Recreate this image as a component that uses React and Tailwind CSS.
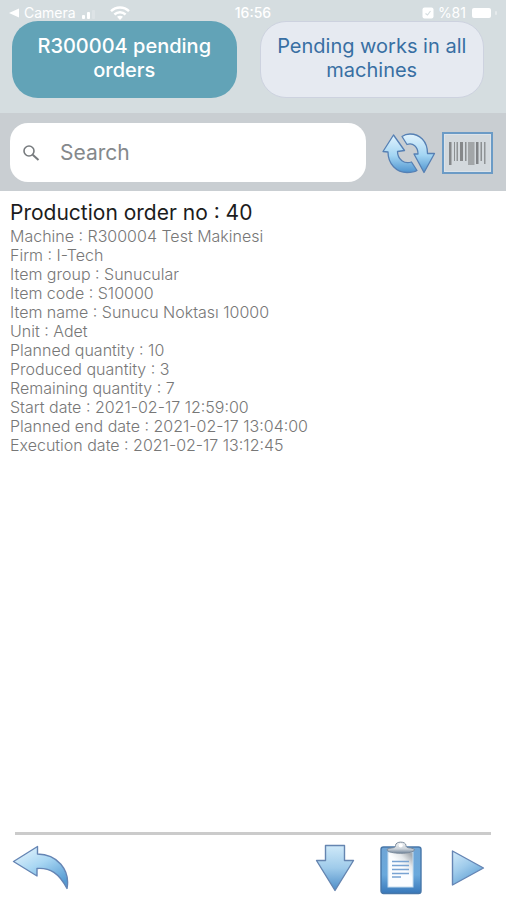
const ORDER_FIELDS = [
  ['Machine', 'R300004 Test Makinesi'],
  ['Firm', 'I-Tech'],
  ['Item group', 'Sunucular'],
  ['Item code', 'S10000'],
  ['Item name', 'Sunucu Noktası 10000'],
  ['Unit', 'Adet'],
  ['Planned quantity', '10'],
  ['Produced quantity', '3'],
  ['Remaining quantity', '7'],
  ['Start date', '2021-02-17 12:59:00'],
  ['Planned end date', '2021-02-17 13:04:00'],
  ['Execution date', '2021-02-17 13:12:45'],
]

// Barcode bars: x, width, height, fill
const BARS = [
  [7, 2.5, 23, '#85888a'],
  [12, 1, 19, '#8c9092'],
  [14.5, 1.5, 19, '#909496'],
  [18, 3, 19, '#85888a'],
  [23, 1.5, 19, '#8c9092'],
  [26, 6.5, 23, '#a2a6a8'],
  [34, 2.5, 22, '#808386'],
  [38.5, 1.5, 19, '#8c9092'],
  [42, 1.5, 22, '#909496'],
]

function StatusBar() {
  return (
    <div className="grid h-[21px] grid-cols-3 items-end px-2 text-sm leading-4 text-white">
      <div className="flex items-center gap-1">
        <svg width="12" height="10" viewBox="0 0 12 10" fill="currentColor">
          <path d="M11 0.5v9L1 5z" />
        </svg>
        <span>Camera</span>
        <svg width="18" height="12" viewBox="0 0 18 12" fill="currentColor">
          <rect x="2" y="8" width="3" height="4" rx="1" />
          <rect x="7" y="5" width="3" height="7" rx="1" />
          <rect x="12" y="3" width="3" height="9" rx="1" opacity="0.2" />
        </svg>
        <svg className="ml-2" width="20" height="14" viewBox="0 0 20 14" fill="none" stroke="currentColor" strokeWidth="2.4">
          <path d="M1 5.2C6 0.2 14 0.2 19 5.2" />
          <path d="M4.4 8.5c3.2-3 8-3 11.2 0" />
          <path d="M7 10.8c1.8-1.5 4.2-1.5 6 0L10 14z" fill="currentColor" stroke="none" />
        </svg>
      </div>
      <span className="text-center font-medium">16:56</span>
      <div className="flex items-center justify-end gap-1">
        <svg width="12" height="12" viewBox="0 0 12 12">
          <rect x="0.5" y="0.5" width="11" height="11" rx="2" fill="#fff" />
          <path d="M3.5 6.5l2 1.5 3-4" fill="none" stroke="#d5dde0" strokeWidth="1.2" />
        </svg>
        <span>%81</span>
        <svg width="28" height="12" viewBox="0 0 28 12" fill="#fff">
          <rect x="2" y="1" width="19" height="10" rx="2" />
          <rect x="25" y="4" width="2" height="4" rx="1" opacity="0.4" />
        </svg>
      </div>
    </div>
  )
}

function RefreshIcon() {
  return (
    <svg width="54" height="44" viewBox="0 0 54 44">
      <defs>
        <linearGradient id="refresh" x1="0" y1="0" x2="0" y2="1">
          <stop offset="0" stopColor="#e2f3fd" />
          <stop offset="0.55" stopColor="#a3d5f3" />
          <stop offset="1" stopColor="#4f94cf" />
        </linearGradient>
      </defs>
      <g fill="url(#refresh)" stroke="#5680b4" strokeWidth="1.3" strokeLinejoin="round">
        <path d="M11.5 4L1 20.500L6 21C6 33 14.500 41.500 25 41.500C29 41.500 32.500 41 35 39.500L29.500 31C22.500 33.500 15.500 28.500 15.500 20.500L22.500 19.500z" />
        <path d="M20 5.500L25 13.500C31 11.500 36 15.500 36 23H32L42 41.500L52.500 22.500H45.500C45.500 10 37.500 3 28 3C25 3 22 4 20 5.500z" />
      </g>
    </svg>
  )
}

function BarcodeIcon() {
  return (
    <svg width="51" height="42" viewBox="0 0 51 42">
      <rect x="1" y="1" width="49" height="40" fill="#d3d9dd" stroke="#6b9bc6" strokeWidth="2" />
      <rect x="2.5" y="2.5" width="46" height="37" fill="none" stroke="#dbe3ea" />
      {BARS.map(([x, width, height, fill]) => (
        <rect key={x} x={x} y="10" width={width} height={height} fill={fill} />
      ))}
    </svg>
  )
}

function BackIcon() {
  return (
    <svg width="58" height="46" viewBox="0 0 58 46">
      <defs>
        <linearGradient id="back" x1="0" y1="0" x2="0.7" y2="1">
          <stop offset="0" stopColor="#f0f9fe" />
          <stop offset="0.5" stopColor="#a9d7f3" />
          <stop offset="1" stopColor="#559bd3" />
        </linearGradient>
      </defs>
      <path
        d="M25.500 1.500L1.500 16.500L25 31V23.500C38 22.500 47 28 55 43.500C58.500 25 45 9 25.500 9z"
        fill="url(#back)"
        stroke="#6585b4"
        strokeWidth="1.4"
        strokeLinejoin="round"
      />
    </svg>
  )
}

function DownIcon() {
  return (
    <svg width="40" height="48" viewBox="0 0 40 48">
      <defs>
        <linearGradient id="down" x1="0" y1="0" x2="0" y2="1">
          <stop offset="0" stopColor="#cfe9f9" />
          <stop offset="0.5" stopColor="#9fcbea" />
          <stop offset="1" stopColor="#4d8dc8" />
        </linearGradient>
      </defs>
      <path
        d="M10.500 1.500H29.500V16.500H38.500L20 46.500L1.500 16.500H10.500z"
        fill="url(#down)"
        stroke="#6585b0"
        strokeWidth="1.4"
        strokeLinejoin="round"
      />
    </svg>
  )
}

function ClipboardIcon() {
  return (
    <svg width="42" height="54" viewBox="0 0 42 54">
      <defs>
        <linearGradient id="board" x1="0" y1="0" x2="0" y2="1">
          <stop offset="0" stopColor="#6fa5d6" />
          <stop offset="0.6" stopColor="#6aa9dc" />
          <stop offset="1" stopColor="#3878ba" />
        </linearGradient>
        <linearGradient id="paper" x1="0.8" y1="0" x2="0.5" y2="0.4">
          <stop offset="0" stopColor="#a7adb3" />
          <stop offset="0.5" stopColor="#e4e8eb" />
          <stop offset="1" stopColor="#fbfdff" />
        </linearGradient>
        <linearGradient id="clip" x1="0" y1="0" x2="0" y2="1">
          <stop offset="0" stopColor="#f1f3f5" />
          <stop offset="0.6" stopColor="#ccd3da" />
          <stop offset="1" stopColor="#71859b" />
        </linearGradient>
      </defs>
      <rect x="1" y="6" width="40" height="46.5" rx="2.5" fill="url(#board)" stroke="#4877a9" strokeWidth="1.4" />
      <rect x="8" y="11" width="25" height="35" fill="url(#paper)" stroke="#c4dcef" strokeWidth="1" />
      <path d="M12 20.500h17M12 24.500h17M12 28.500h17M12 32.500h17M12 36h9" stroke="#78a3d2" strokeWidth="1.5" />
      <path
        d="M7 8.500C10 6 15.500 8 15.500 4.500C15.500 0 26 0 26 4.500C26 8 31.500 6 34.500 8.500C34.500 13.500 7 13.500 7 8.500z"
        fill="url(#clip)"
        stroke="#7c8b9c"
        strokeWidth="1"
      />
      <circle cx="20.7" cy="4.5" r="2" fill="#fff" />
    </svg>
  )
}

function PlayIcon() {
  return (
    <svg width="34" height="38" viewBox="0 0 34 38">
      <defs>
        <linearGradient id="play" x1="0" y1="0" x2="0.6" y2="1">
          <stop offset="0" stopColor="#d3ebfa" />
          <stop offset="0.5" stopColor="#9fcbeb" />
          <stop offset="1" stopColor="#5e9fd4" />
        </linearGradient>
      </defs>
      <path d="M1.500 2L32.500 19L1.500 36z" fill="url(#play)" stroke="#6585b4" strokeWidth="1.4" strokeLinejoin="round" />
    </svg>
  )
}

export default function App() {
  return (
    <div className="flex min-h-screen flex-col bg-white font-['Inter',sans-serif]">
      <header className="bg-[#d5dde0] pb-[15px]">
        <StatusBar />
        <div className="grid grid-cols-2 gap-[23px] pr-[22px] pl-3 text-xl leading-6">
          <button className="h-[77px] rounded-[26px] bg-[#62a3b7] px-4 pb-1 font-medium text-white">
            R300004 pending orders
          </button>
          <button className="h-[77px] rounded-[26px] border border-[#cdd2df] bg-[#e6eaf1] px-3 pb-1 text-[#386fa3]">
            Pending works in all machines
          </button>
        </div>
      </header>

      <div className="flex items-center bg-[#c9ced2] pt-[10px] pr-[13px] pb-[9px] pl-[10px]">
        <label className="flex h-[59px] min-w-0 flex-1 items-center gap-5 rounded-[18px] bg-white px-3">
          <svg width="18" height="18" viewBox="0 0 18 18" fill="none" stroke="#777b7e" strokeWidth="1.6">
            <circle cx="7" cy="7" r="5" />
            <path d="M10.700 10.700L16.500 16" strokeWidth="2" />
          </svg>
          <input
            type="text"
            aria-label="Search"
            placeholder="Search"
            className="min-w-0 flex-1 text-[21px] leading-7 text-[#333] outline-none placeholder:text-[#85898c]"
          />
        </label>
        <button aria-label="Refresh" className="ml-4">
          <RefreshIcon />
        </button>
        <button aria-label="Scan barcode" className="ml-[6px]">
          <BarcodeIcon />
        </button>
      </div>

      <main className="flex-1 px-[10px] pt-2">
        <h1 className="text-[21px] leading-7 text-[#1c1c1c]">Production order no : 40</h1>
        <ul className="text-base leading-[19px] font-light text-[#777777]">
          {ORDER_FIELDS.map(([label, value]) => (
            <li key={label}>
              {label} : {value}
            </li>
          ))}
        </ul>
      </main>

      <footer>
        <div className="mx-[15px] h-[3px] bg-[#cbcbcb]" />
        <div className="flex h-[65px] items-center justify-between pr-[21px] pl-3">
          <button aria-label="Back">
            <BackIcon />
          </button>
          <div className="flex items-center gap-[25px]">
            <button aria-label="Download">
              <DownIcon />
            </button>
            <button aria-label="Order details">
              <ClipboardIcon />
            </button>
            <button aria-label="Start" className="ml-1">
              <PlayIcon />
            </button>
          </div>
        </div>
      </footer>
    </div>
  )
}
